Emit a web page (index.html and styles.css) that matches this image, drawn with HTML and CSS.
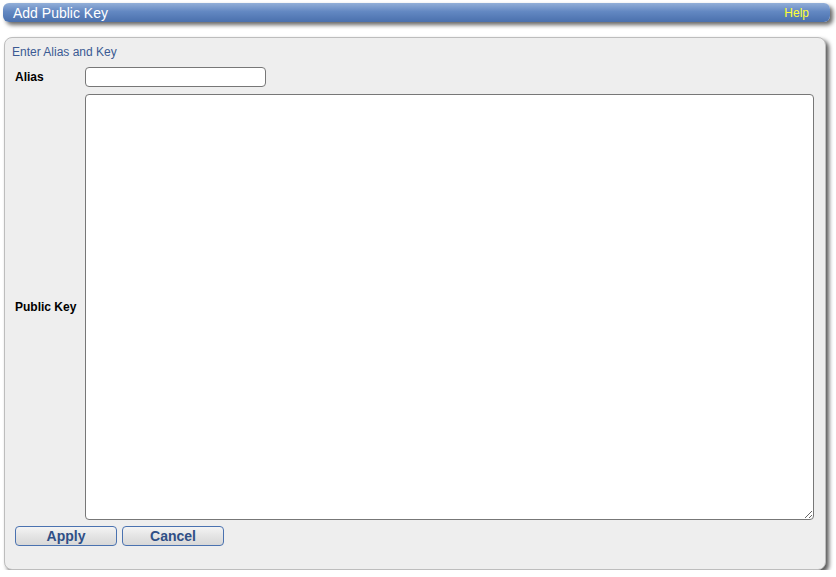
FILE: index.html
```html
<!DOCTYPE html>
<html lang="en">
<head>
    <meta charset="UTF-8">
    <title>Add Public Key</title>
    <link rel="stylesheet" href="styles.css">
</head>
<body>
    <div class="title-bar">
        <span class="title">Add Public Key</span>
        <a class="help" href="#">Help</a>
    </div>
    <div class="panel">
        <div class="legend">Enter Alias and Key</div>
        <div class="form-grid">
            <label class="field-label" for="alias">Alias</label>
            <input type="text" id="alias" class="alias-input">
            <label class="field-label key-label" for="pubkey">Public Key</label>
            <textarea id="pubkey" class="key-input"></textarea>
        </div>
        <div class="actions">
            <button class="btn">Apply</button>
            <button class="btn">Cancel</button>
        </div>
    </div>
</body>
</html>
```

FILE: styles.css
```css
body {
    margin: 0;
    font-family: "Liberation Sans", Arial, sans-serif;
    background: #fff;
    color: #000;
}
.title-bar {
    margin: 3px 6px 0 3px;
    height: 19px;
    display: flex;
    align-items: center;
    justify-content: space-between;
    padding: 0 21px 0 10px;
    border-radius: 6px;
    background: linear-gradient(#93afd8, #6388c2 45%, #4a70ad);
    box-shadow: 3px 3px 4px rgba(0, 0, 0, 0.6);
}
.title {
    color: #fff;
    font-size: 14px;
}
.help {
    color: #ffff33;
    font-size: 12px;
    text-decoration: none;
}
.panel {
    margin: 15px 10px 0 4px;
    height: 533px;
    box-sizing: border-box;
    padding: 7px 11px 0 7px;
    background: #eeeeee;
    border: 1px solid #bdbdbd;
    border-radius: 8px;
    box-shadow: 3px 3px 4px rgba(0, 0, 0, 0.65);
}
.legend {
    color: #3b5a93;
    font-size: 12px;
}
.form-grid {
    display: grid;
    grid-template-columns: 73px 1fr;
    row-gap: 7px;
    margin-top: 8px;
}
.field-label {
    font-size: 12px;
    font-weight: bold;
    padding-left: 3px;
    align-self: center;
}
.alias-input {
    width: 181px;
    height: 20px;
    box-sizing: border-box;
    border: 1px solid #777;
    border-radius: 4px;
    background: #fff;
    margin: 0;
}
.key-input {
    height: 426px;
    box-sizing: border-box;
    border: 1px solid #777;
    border-radius: 4px;
    background: #fff;
    margin: 0;
    resize: both;
}
.actions {
    display: flex;
    gap: 5px;
    margin-top: 6px;
    padding-left: 3px;
}
.btn {
    width: 102px;
    height: 20px;
    padding: 0;
    font-family: "Liberation Sans", Arial, sans-serif;
    font-size: 14px;
    font-weight: bold;
    color: #2f4f86;
    border: 1px solid #4a72b0;
    border-radius: 4px;
    background: linear-gradient(#f4f4f4, #e4e4e4 50%, #d8d8d8);
    cursor: pointer;
}
```
